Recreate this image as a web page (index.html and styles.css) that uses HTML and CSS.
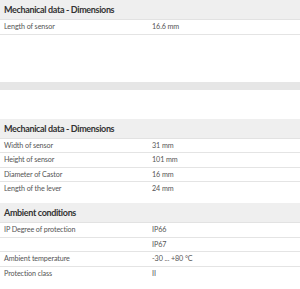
FILE: index.html
```html
<!DOCTYPE html>
<html>
<head>
<meta charset="utf-8">
<link rel="stylesheet" href="styles.css">
</head>
<body>
<section class="block first">
  <div class="head">Mechanical data - Dimensions</div>
  <div class="row"><span class="k">Length of sensor</span><span class="v">16.6 mm</span></div>
</section>
<div class="band"></div>
<section class="block">
  <div class="head">Mechanical data - Dimensions</div>
  <div class="row"><span class="k">Width of sensor</span><span class="v">31 mm</span></div>
  <div class="row"><span class="k">Height of sensor</span><span class="v">101 mm</span></div>
  <div class="row"><span class="k">Diameter of Castor</span><span class="v">16 mm</span></div>
  <div class="row last"><span class="k">Length of the lever</span><span class="v">24 mm</span></div>
</section>
<section class="block ambient">
  <div class="head">Ambient conditions</div>
  <div class="row"><span class="k">IP Degree of protection</span><span class="v">IP66</span></div>
  <div class="row"><span class="k"></span><span class="v">IP67</span></div>
  <div class="row"><span class="k">Ambient temperature</span><span class="v">-30 ... +80 °C</span></div>
  <div class="row last"><span class="k">Protection class</span><span class="v">II</span></div>
</section>
</body>
</html>
```
FILE: styles.css
```css
html, body {
  margin: 0;
  padding: 0;
  background: #fff;
}
body {
  font-family: "Lato", "Open Sans", sans-serif;
  color: #444;
  width: 300px;
}
.block {
  display: flex;
  flex-direction: column;
}
.head {
  height: 19px;
  line-height: 20px;
  background: #efefef;
  border-bottom: 1px solid #e2e2e2;
  padding-left: 4px;
  font-size: 9px;
  font-weight: 700;
  letter-spacing: -0.35px;
  color: #333;
}
.row {
  display: grid;
  grid-template-columns: 148px 1fr;
  height: 13.5px;
  line-height: 14px;
  padding-left: 4px;
  border-bottom: 1px solid #e4e4e4;
  font-size: 7.2px;
  letter-spacing: -0.1px;
  color: #555;
}
.row.last {
  border-bottom: none;
  height: 14px;
}
.block.first {
  margin-bottom: 47px;
}
.band {
  height: 8px;
  background: #e6e6e6;
  margin-bottom: 29px;
}
.block.ambient {
  margin-top: 7px;
}
```
